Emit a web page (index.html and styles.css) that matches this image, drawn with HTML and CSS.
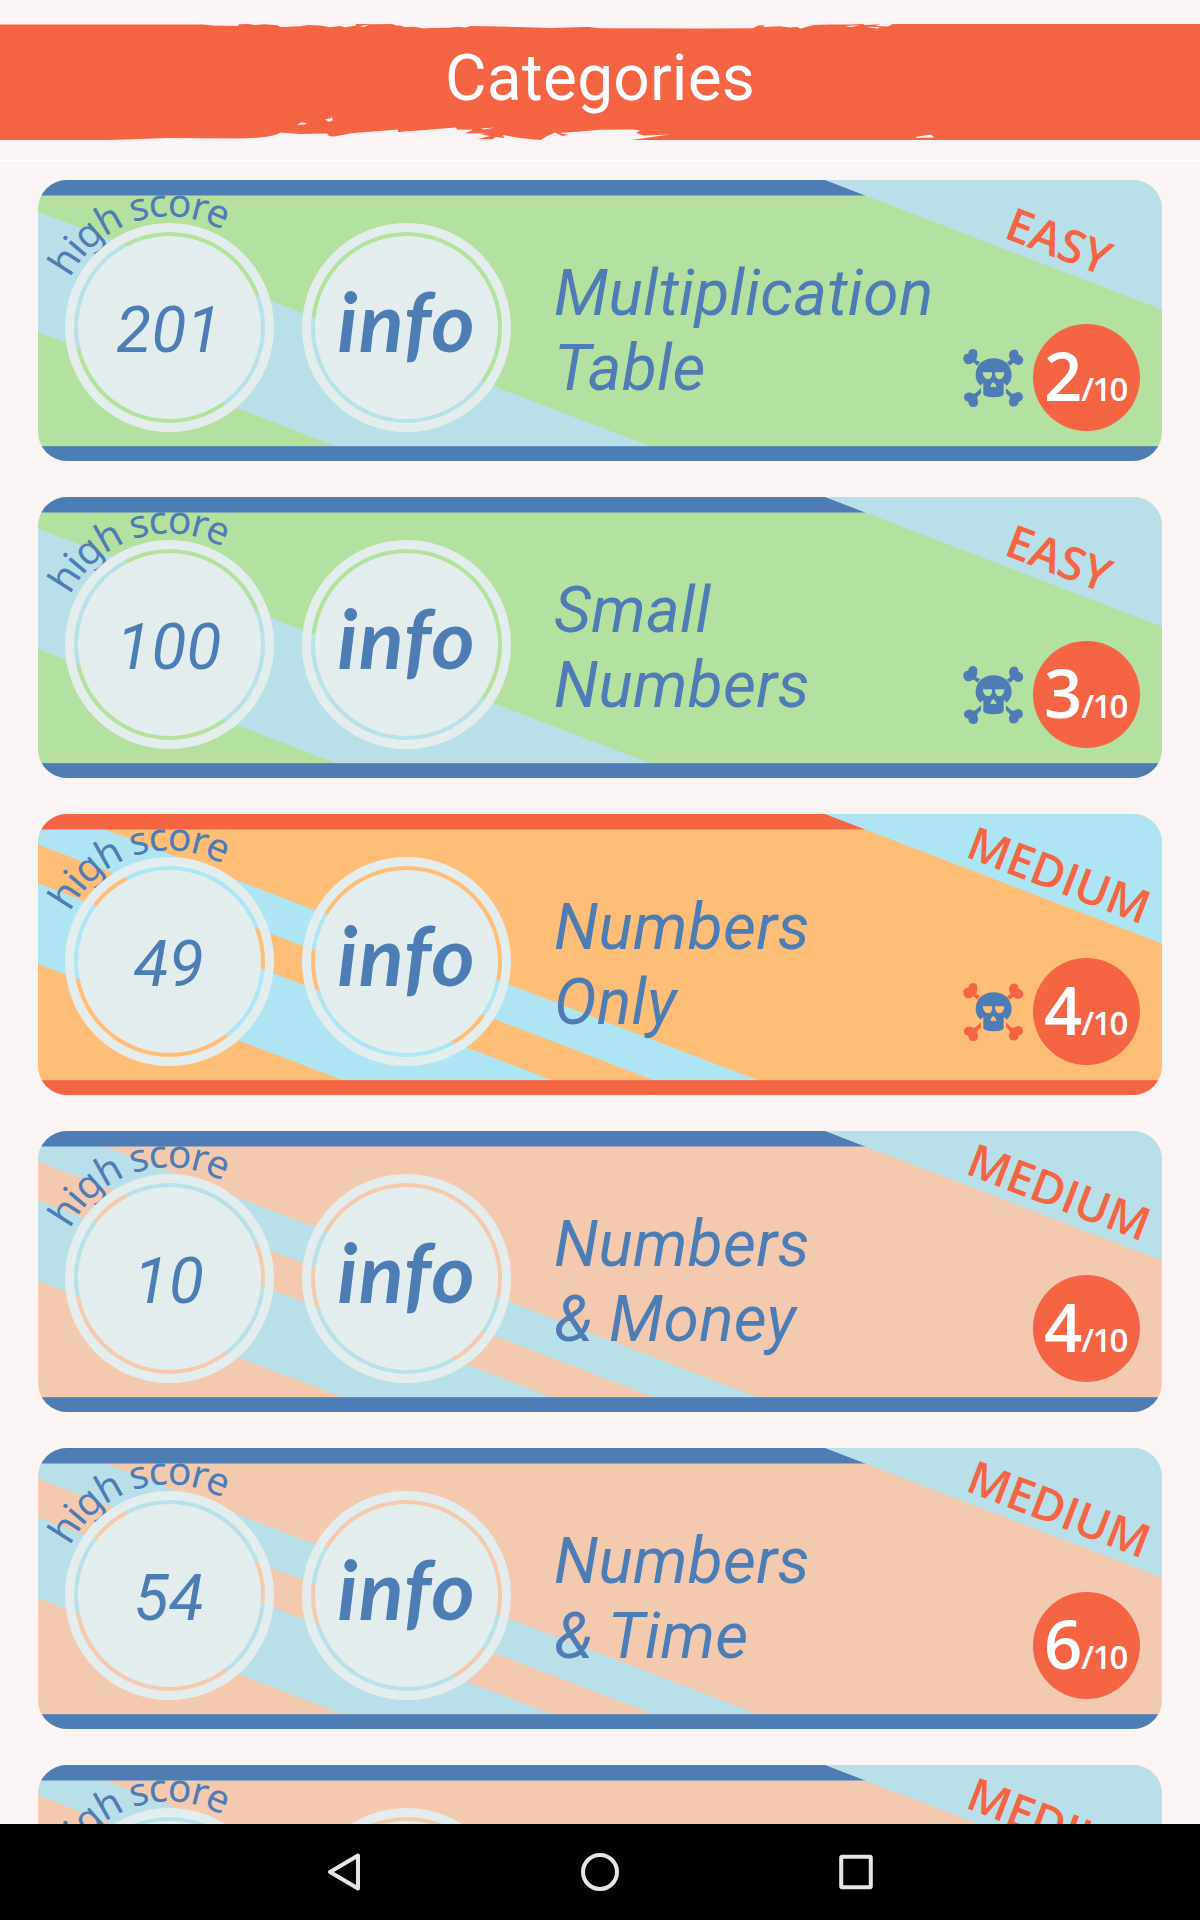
FILE: index.html
```
<!DOCTYPE html>
<html lang="en">
<head>
    <meta charset="UTF-8">
    <meta name="viewport" content="width=device-width, initial-scale=1.0">
    <title>Categories</title>
    <link rel="stylesheet" href="styles.css">
</head>
<body>
    <!-- shared shapes -->
    <svg class="defs" width="0" height="0">
        <defs>
            <path id="scoreArc" d="M32.2 98.2A110.5 110.5 0 0 1 209.6 68.9" fill="none"/>
            <symbol id="base" viewBox="0 0 1124 281">
                <path class="bar" d="M0 0H788L828 15.4H0Z"/>
                <rect class="bar" y="266.2" width="1124" height="14.8"/>
                <path class="stripe" d="M787 0H1124V129.5Z"/>
                <text class="arc-text"><textPath href="#scoreArc" textLength="179">high score</textPath></text>
            </symbol>
            <symbol id="easy" viewBox="0 0 1124 281">
                <path class="stripe" d="M0 31.5L612 266.2H298L0 152Z"/>
                <use href="#base" width="1124" height="281"/>
                <text class="level" transform="translate(964.5 57.3) rotate(21)" textLength="108">EASY</text>
            </symbol>
            <symbol id="medium" viewBox="0 0 1124 281">
                <path class="stripe" d="M0 -10.2L720 266.2H616L0 30.5Z"/>
                <path class="stripe" d="M0 69.3L514 266.2H305L0 150Z"/>
                <use href="#base" width="1124" height="281"/>
                <text class="level" transform="translate(926 42.3) rotate(21)" textLength="191">MEDIUM</text>
            </symbol>
            <symbol id="skull" viewBox="35 50 190 185">
                <g class="bones">
                    <path d="M81 106L89 96L83 91Q78 94 78 88Q84 76 80 62Q72 52 60 58Q53 62 54 70Q43 69 39 80Q38 94 47 100Q58 105 67 97Q72 95 75 101Z"/>
                    <path d="M179 106L170 97L176 91Q180 92 180 87Q173 76 179 64Q188 54 200 60Q205 65 205 73Q217 76 219 88Q218 101 206 104Q196 103 191 97Q187 98 185 102Z"/>
                    <path d="M92 174V189L81 200Q80 203 82 208Q86 219 79 227Q68 234 58 226Q54 221 54 214Q43 213 41 203Q40 191 52 187Q61 185 68 190Q72 191 76 188Z"/>
                    <path d="M167 174V189L178 199Q180 202 177 208Q173 218 181 226Q191 232 201 225Q205 221 205 214Q218 211 218 200Q217 187 204 185Q196 187 190 190Q186 191 182 188Z"/>
                </g>
                <path class="head" fill-rule="evenodd" d="M91 166C78 155 76 142 76 135C76 104 99 84 130 84C161 84 184 104 184 135C184 142 182 155 169 166Q166 165 163 159Q159 158 160 164V192Q157 201 130 201Q103 201 99 192V164Q100 158 97 159Q94 162 91 166ZM97 126H125Q127 146 113 147Q100 147 97 126ZM134 126H162Q161 147 147 147Q134 147 134 126ZM129 155Q134 159 139 169L133 171L130 168L127 171L120 169Q123 159 129 155Z"/>
            </symbol>
        </defs>
    </svg>

    <header class="header">
        <svg class="brush" viewBox="0 0 1200 180">
            <path d="M0 24.5H203L213 25.5L238 26L239 24.3L248 24L255 25L265 24.2L277 25.3L281 27L300 26.3L308 25L320 25.4L330 27.2L340 26L345 27.3L356 25.5V24L375 24.3L392 24L396 25.6L404 26L402 27L414 26.8L424 28.5L432 28L450 27.8L458 26.8L465 27.5L471 26L500 26.5L550 28L588 27L600 28.3L700 28.6L753 28.2L758 25.5L765 25.3L763 27L780 26.3L790 27.5L797 27L801 28.8L806 27L814 25L830 24.4L850 24.6L863 24L865 25L880 24.3L875 26L888 26.6L892 24.2L899 24H1200V140H666L632 140L655 136.5L670 134.5L644 135.5L636 133L640 130.5L633 129.5L600 129.8L580 131.5L559 133L568 135L562 136L555 132.5L547 136L541 140L520 138L503 135L504 138L496 137L492 139.3L478 139L490 136L480 134L488 133.3L465 133.5L473 129.8L457 129.5L456 127.5L425 130L398 132V129.5L380 131L353 133L334 136.5L329 136L327 133.5L300 134L281 132.5Q270 138.5 235 138.5L170 138L108 140H0Z"/>
            <path class="fleck" d="M297 125L301 122.5L307 123L305 124.5Z M325 119.5L331 118V116L333 120L329 122Z M481 128.5L495 127.5L484 129.5Z M915 137L931 134.5L934 137.5L917 138Z M359 26L369 25L364 27Z M845 26L860 25.3L851 27Z M866 26.8L881 27L877 28.8Z"/>
        </svg>
        <h1>Categories</h1>
    </header>

    <main class="list">
        <section class="card green">
            <svg class="art"><use href="#easy"/></svg>
            <div class="ring"><div class="disc score">201</div></div>
            <div class="ring"><div class="disc info">info</div></div>
            <h2>Multiplication<br>Table</h2>
            <div class="rating">
                <svg class="skull"><use href="#skull"/></svg>
                <div class="badge"><b>2</b><span>/10</span></div>
            </div>
        </section>

        <section class="card green">
            <svg class="art"><use href="#easy"/></svg>
            <div class="ring"><div class="disc score">100</div></div>
            <div class="ring"><div class="disc info">info</div></div>
            <h2>Small<br>Numbers</h2>
            <div class="rating">
                <svg class="skull"><use href="#skull"/></svg>
                <div class="badge"><b>3</b><span>/10</span></div>
            </div>
        </section>

        <section class="card orange">
            <svg class="art"><use href="#medium"/></svg>
            <div class="ring"><div class="disc score">49</div></div>
            <div class="ring"><div class="disc info">info</div></div>
            <h2>Numbers<br>Only</h2>
            <div class="rating">
                <svg class="skull"><use href="#skull"/></svg>
                <div class="badge"><b>4</b><span>/10</span></div>
            </div>
        </section>

        <section class="card peach">
            <svg class="art"><use href="#medium"/></svg>
            <div class="ring"><div class="disc score">10</div></div>
            <div class="ring"><div class="disc info">info</div></div>
            <h2>Numbers<br>&amp; Money</h2>
            <div class="rating">
                <div class="badge"><b>4</b><span>/10</span></div>
            </div>
        </section>

        <section class="card peach">
            <svg class="art"><use href="#medium"/></svg>
            <div class="ring"><div class="disc score">54</div></div>
            <div class="ring"><div class="disc info">info</div></div>
            <h2>Numbers<br>&amp; Time</h2>
            <div class="rating">
                <div class="badge"><b>6</b><span>/10</span></div>
            </div>
        </section>

        <section class="card peach">
            <svg class="art"><use href="#medium"/></svg>
            <div class="ring"><div class="disc"></div></div>
            <div class="ring"><div class="disc"></div></div>
        </section>
    </main>

    <nav class="navbar">
        <svg viewBox="0 0 40 40"><path d="M34 3.5V36.5L6 20Z"/></svg>
        <svg viewBox="0 0 40 40"><circle cx="20" cy="20" r="17"/></svg>
        <svg viewBox="0 0 40 40"><rect x="5.2" y="4.8" width="29.6" height="30.4" rx="1"/></svg>
    </nav>
</body>
</html>
```
FILE: styles.css
```
* {
    box-sizing: border-box;
}
body {
    margin: 0;
    height: 1920px;
    overflow: hidden;
    display: flex;
    flex-direction: column;
    background-color: #faf4f4;
    color: #4d7db5;
    font-family: Roboto, sans-serif;
}
.defs {
    position: absolute;
}
.header {
    position: relative;
    flex: none;
    height: 162px;
    border-bottom: 2px solid white;
}
.brush {
    position: absolute;
    top: 0;
    left: 0;
    width: 1200px;
    height: 180px;
    fill: #f56443;
}
.fleck {
    fill: #faf4f4;
}
h1 {
    position: relative;
    margin: 0;
    padding-top: 41px;
    color: white;
    font-size: 64px;
    font-weight: 400;
    letter-spacing: 0.2px;
    line-height: 75px;
    text-align: center;
}
.list {
    flex: 1;
    min-height: 0;
    overflow: hidden;
    display: flex;
    flex-direction: column;
    gap: 36px;
    padding: 18px 38px 0;
}
.card {
    position: relative;
    flex: none;
    height: 281px;
    display: flex;
    align-items: flex-start;
    padding: 42.5px 22px 0 27px;
    border-radius: 29px;
    overflow: hidden;
    --bar: #4d7db5;
    --stripe: #b9dfe8;
    --bones: #4d7db5;
}
.green {
    background-color: #b4e19f;
}
.orange {
    background-color: #ffbe78;
    --bar: #f56443;
    --stripe: #aee5f2;
    --bones: #f56443;
}
.peach {
    background-color: #f3cab0;
}
.art {
    position: absolute;
    top: 0;
    left: 0;
    width: 1124px;
    height: 281px;
}
.bar {
    fill: var(--bar);
}
.stripe {
    fill: var(--stripe);
}
.arc-text {
    fill: #4d7db5;
    font-family: "Noto Sans", sans-serif;
    font-size: 39px;
}
.level {
    fill: #f56443;
    font-family: "Open Sans", sans-serif;
    font-size: 46px;
    font-weight: 600;
}
.ring {
    position: relative;
    flex: none;
    width: 209px;
    height: 209px;
    margin-right: 28px;
    padding: 4px;
    border: 9px solid #e4eded;
    border-radius: 50%;
}
.disc {
    height: 100%;
    border-radius: 50%;
    background-color: #e4eded;
    font-style: italic;
    text-align: center;
}
.score {
    padding: 57px 1px 0 0;
    font-size: 64px;
    letter-spacing: 0.3px;
    line-height: 75px;
}
.info {
    padding-top: 36px;
    font-family: Lato, sans-serif;
    font-size: 83px;
    font-weight: 700;
    letter-spacing: 1px;
    line-height: 96px;
}
h2 {
    position: relative;
    margin: 33.5px 0 0 15px;
    font-size: 64px;
    font-style: italic;
    font-weight: 400;
    letter-spacing: 0.3px;
    line-height: 75px;
}
.rating {
    position: relative;
    display: flex;
    align-items: center;
    gap: 8px;
    margin: 101.5px 0 0 auto;
}
.skull {
    width: 63.3px;
    height: 61.7px;
}
.bones {
    fill: var(--bones);
}
.head {
    fill: #4d7db5;
}
.badge {
    display: flex;
    align-items: baseline;
    width: 107px;
    height: 107px;
    padding: 6px 0 0 11px;
    border-radius: 50%;
    background-color: #f56443;
    color: white;
    font-family: "Open Sans", sans-serif;
    font-weight: 600;
}
.badge b {
    font-size: 67px;
    font-weight: 600;
    letter-spacing: -1px;
    line-height: 90px;
}
.badge span {
    font-size: 33px;
    letter-spacing: -1.8px;
}
.navbar {
    flex: none;
    height: 96px;
    display: flex;
    align-items: center;
    justify-content: center;
    gap: 216px;
    background-color: black;
}
.navbar svg {
    width: 40px;
    height: 40px;
    fill: none;
    stroke: #e6e6e6;
    stroke-width: 4;
    stroke-linejoin: round;
}
```
